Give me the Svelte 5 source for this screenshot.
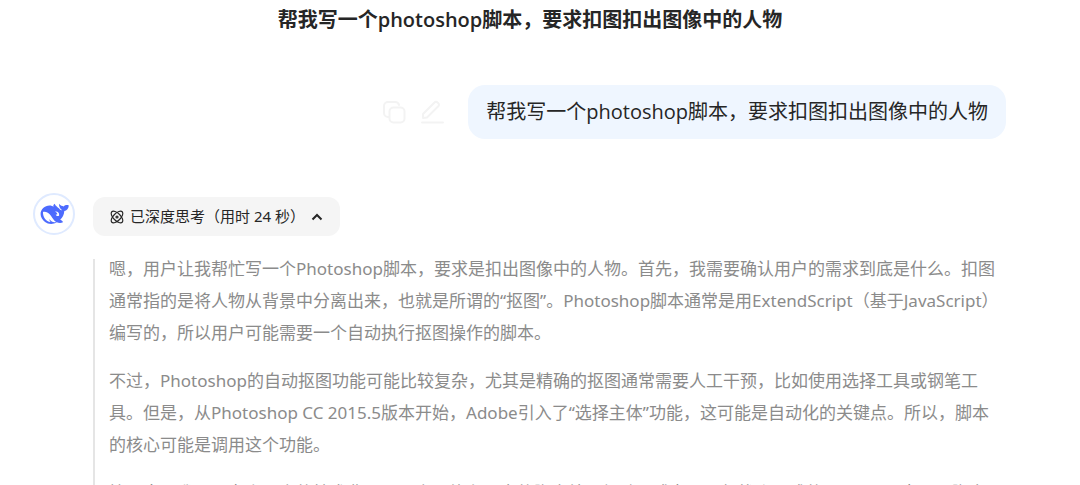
<script>
	const title = '帮我写一个photoshop脚本，要求扣图扣出图像中的人物';
	const seconds = 24;

	const paragraphs = [
		'嗯，用户让我帮忙写一个Photoshop脚本，要求是扣出图像中的人物。首先，我需要确认用户的需求到底是什么。扣图通常指的是将人物从背景中分离出来，也就是所谓的“抠图”。Photoshop脚本通常是用ExtendScript（基于JavaScript）编写的，所以用户可能需要一个自动执行抠图操作的脚本。',
		'不过，Photoshop的自动抠图功能可能比较复杂，尤其是精确的抠图通常需要人工干预，比如使用选择工具或钢笔工具。但是，从Photoshop CC 2015.5版本开始，Adobe引入了“选择主体”功能，这可能是自动化的关键点。所以，脚本的核心可能是调用这个功能。',
		'接下来，我需要考虑用户的技术背景。用户可能有一定的脚本编写经验，或者只是想找个现成的JavaScript来用。脚本'
	];

	let expanded = $state(true);
</script>

<div class="chat">
	<header>
		<h1>{title}</h1>
	</header>

	<div class="user-row">
		<div class="actions">
			<button type="button" aria-label="复制">
				<svg viewBox="0 0 24 24" width="24" height="24">
					<path d="M7 17H6a4 4 0 0 1-4-4V6a4 4 0 0 1 4-4h7a4 4 0 0 1 4 3" />
					<rect x="7.500" y="7.500" width="15" height="15" rx="4" />
				</svg>
			</button>
			<button type="button" aria-label="编辑">
				<svg viewBox="0 0 24 24" width="24" height="24">
					<path d="M3 18v-4L14.500 2.500a2 2 0 0 1 3 0l.8.800a2 2 0 0 1 0 3L7 17.500z" />
					<path d="M2 22.500h21" />
				</svg>
			</button>
		</div>
		<div class="bubble">{title}</div>
	</div>

	<div class="answer-row">
		<div class="avatar">
			<svg viewBox="46 58 86 64" width="30" height="22">
				<path
					fill="#4d6bfe"
					d="M50 90C50 76 62 65 76 65c6 0 8 2 12 4-2-3-1-6 3-9 2 6 8 9 13 14 3 4 6 6 8 4-6-4-9-10-8-18 4 6 9 6 13 8 4-4 10-5 15-3 0 9-6 15-13 16-1 11-5 19-12 25 5 3 8 5 8 8-6 3-13 2-18 0-11 7-25 6-34-1-8-6-13-14-13-23z"
				/>
				<path
					fill="#fff"
					d="M57 84c8-2 17 3 23 11 6 8 8 14 15 18-7 3-14-1-19-8-1 2 1 5 3 8-13-1-23-15-22-29z"
				/>
				<path fill="#fff" d="M92 83c6-2 13 3 12 11-3 3-8 2-10-2l5-1c-1-4-4-6-7-8z" />
			</svg>
		</div>

		<div class="answer">
			<button class="thinking" type="button" aria-expanded={expanded} onclick={() => (expanded = !expanded)}>
				<svg viewBox="0 0 14 14" width="14" height="14">
					<ellipse cx="7" cy="7" rx="7.400" ry="3.600" transform="rotate(45 7 7)" />
					<ellipse cx="7" cy="7" rx="7.400" ry="3.600" transform="rotate(-45 7 7)" />
					<circle cx="7" cy="7" r="1" />
				</svg>
				<span>已深度思考（用时 {seconds} 秒）</span>
				<svg class="chevron" class:closed={!expanded} viewBox="0 0 12 12" width="12" height="12">
					<path d="M1.500 8.500L6 4l4.500 4.500" />
				</svg>
			</button>

			{#if expanded}
				<div class="thoughts">
					{#each paragraphs as text}
						<p>{text}</p>
					{/each}
				</div>
			{/if}
		</div>
	</div>
</div>

<style>
	:global(body) {
		background: #fff;
		overflow: hidden;
	}

	.chat {
		font-family: 'Noto Sans', 'Noto Sans CJK SC', sans-serif;
		color: #262626;
		height: 100vh;
		overflow: hidden;
	}

	header {
		padding: 4px 20px 4px 0;
	}

	h1 {
		margin: 0;
		font-family: 'Open Sans', 'Noto Sans CJK SC', sans-serif;
		font-size: 20px;
		line-height: 32px;
		font-weight: 600;
		text-align: center;
	}

	button {
		border: none;
		padding: 0;
		background: none;
		font-family: inherit;
		color: inherit;
		cursor: pointer;
	}

	svg {
		display: block;
	}

	.user-row {
		display: flex;
		justify-content: flex-end;
		align-items: center;
		gap: 24px;
		margin: 45px 74px 0 20px;
	}

	.actions {
		display: flex;
		gap: 14px;
	}

	.actions svg {
		fill: none;
		stroke: #f3f3f3;
		stroke-width: 2;
		stroke-linecap: round;
		stroke-linejoin: round;
	}

	.bubble {
		padding: 11px 18px;
		border-radius: 17px;
		background: #eff6ff;
		font-family: 'Open Sans', 'Noto Sans CJK SC', sans-serif;
		font-size: 20px;
		line-height: 32px;
	}

	.answer-row {
		display: flex;
		gap: 18px;
		margin: 54px 74px 0 33px;
	}

	.avatar {
		flex-shrink: 0;
		box-sizing: border-box;
		display: flex;
		align-items: center;
		justify-content: center;
		width: 42px;
		height: 42px;
		border: 2px solid #dfeaff;
		border-radius: 50%;
	}

	.answer {
		min-width: 0;
		padding-top: 4px;
	}

	.thinking {
		display: flex;
		align-items: center;
		gap: 6px;
		padding: 0 17px;
		border-radius: 12px;
		background: #f5f5f5;
		font-size: 15px;
		line-height: 39px;
	}

	.thinking svg {
		fill: none;
		stroke: #262626;
		stroke-width: 1.2;
	}

	.thinking .chevron {
		stroke-width: 2;
	}

	.chevron.closed {
		transform: rotate(180deg);
	}

	.thoughts {
		display: flow-root;
		margin-top: 23px;
		padding: 0 4px 0 14px;
		border-left: 2px solid #e5e5e5;
		color: #8b8b8b;
		font-size: 17px;
		line-height: 32px;
	}

	p {
		margin: 0 0 16px;
	}

	/* the first line starts level with the rule on the left */
	p:first-child {
		margin-top: -6px;
	}
</style>
